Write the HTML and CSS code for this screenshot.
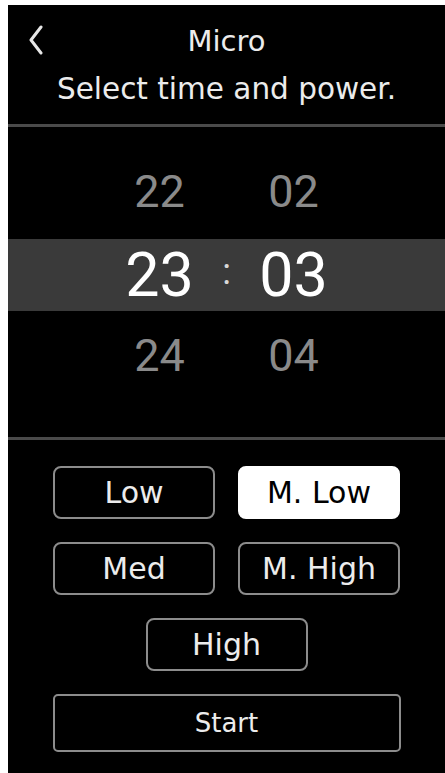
FILE: index.html
```html
<!DOCTYPE html>
<html lang="en">
  <head>
    <meta charset="UTF-8" />
    <meta name="viewport" content="width=device-width, initial-scale=1.0" />
    <title>Micro</title>
    <link rel="stylesheet" href="styles.css">
  </head>
  <body>
    <div class="screen">
      <div class="header">
        <svg class="back" width="16" height="30" viewBox="0 0 16 30">
          <path d="M13 2 L3 15 L13 28" fill="none" stroke="#e6e6e6" stroke-width="3" stroke-linecap="round" stroke-linejoin="round" />
        </svg>
        <h1 class="title">Micro</h1>
      </div>
      <p class="subtitle">Select time and power.</p>
      <div class="divider"></div>

      <div class="picker">
        <div class="row">
          <span class="cell">22</span>
          <span class="sep"></span>
          <span class="cell">02</span>
        </div>
        <div class="row current">
          <span class="cell">23</span>
          <span class="sep">:</span>
          <span class="cell">03</span>
        </div>
        <div class="row">
          <span class="cell">24</span>
          <span class="sep"></span>
          <span class="cell">04</span>
        </div>
      </div>
      <div class="divider"></div>

      <div class="powers">
        <button class="power">Low</button>
        <button class="power selected">M. Low</button>
        <button class="power">Med</button>
        <button class="power">M. High</button>
        <button class="power wide">High</button>
      </div>
      <button class="start">Start</button>
    </div>
  </body>
</html>
```

FILE: styles.css
```css
body {
  margin: 0;
  background: #fff;
  font-family: "DejaVu Sans", "Noto Sans", sans-serif;
}
.screen {
  margin: 5px 0 0 8px;
  height: 768px;
  background: #000;
  color: #ececec;
  overflow: hidden;
}
.header {
  position: relative;
  padding-top: 18px;
  text-align: center;
}
.back {
  position: absolute;
  left: 20px;
  top: 20px;
}
.title {
  margin: 0;
  font-size: 29px;
  font-weight: 400;
  line-height: 36px;
}
.subtitle {
  margin: 10px 0 0;
  font-size: 29.5px;
  line-height: 40px;
  text-align: center;
}
.divider {
  height: 3px;
  background: #4a4a4a;
  margin-top: 15px;
}
.picker {
  padding: 28px 0 46px;
  font-family: Roboto, "Liberation Sans", sans-serif;
}
.row {
  display: flex;
  justify-content: center;
  align-items: center;
  height: 72px;
  font-size: 45px;
  color: #8a8a8a;
}
.row + .row {
  margin-top: 12px;
}
.row.current {
  background: #3a3a3a;
  color: #fff;
  font-size: 61px;
}
.row:last-child {
  margin-top: 8px;
}
.cell {
  width: 110px;
  text-align: center;
}
.sep {
  width: 24px;
  text-align: center;
  font-size: 36px;
  color: #d8d8d8;
  position: relative;
  top: -3px;
}
.picker + .divider {
  margin-top: 0;
}
.powers {
  display: grid;
  grid-template-columns: 162px 162px;
  justify-content: center;
  gap: 23px;
  margin-top: 26px;
}
.power,
.start {
  font-family: "DejaVu Sans", "Noto Sans", sans-serif;
  background: #000;
  color: #ececec;
  border: 2px solid #8c8c8c;
  border-radius: 8px;
  height: 53px;
  font-size: 30px;
  padding: 0;
}
.power.selected {
  background: #fff;
  color: #000;
  border-color: #fff;
}
.power.wide {
  grid-column: 1 / 3;
  justify-self: center;
  width: 162px;
}
.start {
  display: block;
  width: 348px;
  height: 58px;
  margin: 23px auto 0;
  font-size: 26px;
  border-radius: 5px;
}
```
